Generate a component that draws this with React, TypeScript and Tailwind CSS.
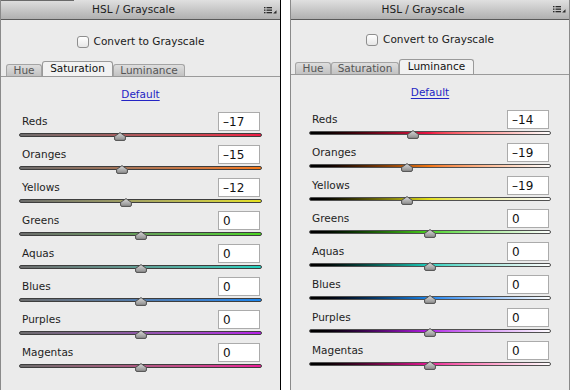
import React from "react";

type Row = { name: string; sat: number; lum: number; satBg: string; lumBg: string };

const rows: Row[] = [
  { name: "Reds", sat: -17, lum: -14, satBg: "from-[#6c6c6c] to-[#ee1644]", lumBg: "from-black via-[#ee1644] to-white" },
  { name: "Oranges", sat: -15, lum: -19, satBg: "from-[#6c6c6c] to-[#f57814]", lumBg: "from-black via-[#f57814] to-white" },
  { name: "Yellows", sat: -12, lum: -19, satBg: "from-[#6c6c6c] to-[#e6e21c]", lumBg: "from-black via-[#e6e21c] to-white" },
  { name: "Greens", sat: 0, lum: 0, satBg: "from-[#6c6c6c] to-[#4ad41e]", lumBg: "from-black via-[#4ad41e] to-white" },
  { name: "Aquas", sat: 0, lum: 0, satBg: "from-[#6c6c6c] to-[#1ed2c0]", lumBg: "from-black via-[#1ed2c0] to-white" },
  { name: "Blues", sat: 0, lum: 0, satBg: "from-[#6c6c6c] to-[#1a86ee]", lumBg: "from-black via-[#1a86ee] to-white" },
  { name: "Purples", sat: 0, lum: 0, satBg: "from-[#6c6c6c] to-[#b41ee6]", lumBg: "from-black via-[#b41ee6] to-white" },
  { name: "Magentas", sat: 0, lum: 0, satBg: "from-[#6c6c6c] to-[#ec1a98]", lumBg: "from-black via-[#ec1a98] to-white" },
];

function MenuIcon() {
  return (
    <svg width="13" height="7" viewBox="0 0 13 7" className="shrink-0">
      <g fill="#2a2a2a">
        <rect x="0" y="0" width="1.5" height="1.3" />
        <rect x="2.5" y="0" width="5.5" height="1.3" />
        <rect x="0" y="2.5" width="1.5" height="1.3" />
        <rect x="2.5" y="2.5" width="5.5" height="1.3" />
        <rect x="0" y="5" width="1.5" height="1.3" />
        <rect x="2.5" y="5" width="5.5" height="1.3" />
        <path d="M12.5 3.2 L12.5 6.5 L9.2 6.5 Z" />
      </g>
    </svg>
  );
}

function Thumb({ id }: { id: string }) {
  return (
    <svg width="12" height="9" viewBox="0 0 12 9">
      <defs>
        <linearGradient id={id} x1="0" y1="0" x2="0" y2="1">
          <stop offset="0" stopColor="#dadada" />
          <stop offset="1" stopColor="#8a8a8a" />
        </linearGradient>
      </defs>
      <path
        d="M6 0.6 L11.4 4.4 L11.4 7 Q11.4 8.4 10 8.4 L2 8.4 Q0.6 8.4 0.6 7 L0.6 4.4 Z"
        fill={`url(#${id})`}
        stroke="#4e4e4e"
        strokeWidth="1"
      />
    </svg>
  );
}

function Panel({ right }: { right?: boolean }) {
  const tabs = right
    ? [
        { t: "Hue", w: "w-[36px]", active: false },
        { t: "Saturation", w: "w-[68px]", active: false },
        { t: "Luminance", w: "w-[75px]", active: true },
      ]
    : [
        { t: "Hue", w: "w-[36px]", active: false },
        { t: "Saturation", w: "w-[71px]", active: true },
        { t: "Luminance", w: "w-[72px]", active: false },
      ];
  return (
    <div
      className={
        right
          ? "ml-[9px] flex h-[390px] w-[280px] flex-col border-x border-[#8a8a8a] bg-[#ebebeb]"
          : "flex h-[390px] w-[281px] flex-col border-l border-r border-l-[#8a8a8a] border-r-black bg-[#ebebeb]"
      }
    >
      {/* header */}
      <div className="flex flex-col border-b border-[#5a5a5a] bg-linear-to-b from-[#e0e0e0] to-[#b0b0b0]">
        {!right && <div className="h-px w-[73px] bg-[#6a6a6a]" />}
        <div className={right ? "flex h-[19px] items-center" : "flex h-[18px] items-center"}>
          <span className="flex-1 pl-[2px] text-center text-[10.5px] text-[#1c1c1c]">HSL / Grayscale</span>
          <div className="mr-[3px] flex items-center">
            <MenuIcon />
          </div>
        </div>
      </div>

      {/* checkbox */}
      <div className={right ? "mt-[13px] flex h-[14px] items-center justify-center gap-[5px]" : "mt-[15px] flex h-[14px] items-center justify-center gap-[5px]"}>
        <span className="h-[12px] w-[12px] rounded-[3px] border border-[#8e8e8e] bg-linear-to-b from-white to-[#e6e6e6]" />
        <span className="text-[10.5px] text-[#1a1a1a]">Convert to Grayscale</span>
      </div>

      {/* tabs */}
      <div className={right ? "mt-[13px] flex h-[15px] items-end border-b border-[#9a9a9a]" : "mt-[13px] flex h-[15px] items-end border-b border-[#9a9a9a]"}>
        <div className={right ? "w-[4px]" : "w-[5px]"} />
        {tabs.map((tab) => (
          <div
            key={tab.t}
            className={
              tab.active
                ? `${tab.w} flex h-[15px] items-center justify-center rounded-t-[3px] border border-b-0 border-[#9a9a9a] bg-[#f2f2f2] text-[10.5px] text-[#111]`
                : `${tab.w} flex h-[12px] items-center justify-center rounded-t-[3px] border border-b-0 border-[#a4a4a4] bg-linear-to-b from-[#dedede] to-[#c2c2c2] text-[10.5px] text-[#555]`
            }
          >
            {tab.t}
          </div>
        ))}
      </div>

      {/* default */}
      <div className="mt-[11px] flex h-[14px] items-center justify-center">
        <span className="text-[10.5px] text-[#2424c4] underline underline-offset-2">Default</span>
      </div>

      {/* rows */}
      <div className="mt-[10px] flex flex-col px-[18px]">
        {rows.map((r, i) => {
          const v = right ? r.lum : r.sat;
          const pct = 50 + v / 2;
          return (
            <div key={r.name} className="flex h-[33px] flex-col">
              <div className="flex h-[19px] items-center justify-between">
                <span className="pl-[3px] text-[10.5px] text-[#1e1e1e]">{r.name}</span>
                <div className="mr-[2px] flex h-[19px] w-[42px] items-center border border-[#ababab] bg-white pl-[4px] text-[12px] text-[#111]">
                  {v < 0 ? `–${-v}` : `${v}`}
                </div>
              </div>
              <div className="relative h-[14px]">
                <div
                  className={
                    right
                      ? `mt-[2px] h-[4px] rounded-full border border-[#505050] bg-linear-to-r ${r.lumBg}`
                      : `mt-[2px] h-[4px] rounded-full border border-[#3e3e3e] bg-linear-to-r ${r.satBg}`
                  }
                />
                <div className="absolute top-[1px] leading-none" style={{ left: `calc(${pct}% - 6px)` }}>
                  <Thumb id={`g${right ? "r" : "l"}${i}`} />
                </div>
              </div>
            </div>
          );
        })}
      </div>
    </div>
  );
}

export default function App() {
  return (
    <div className="flex h-[390px] w-[570px] overflow-hidden bg-white font-['DejaVu_Sans',sans-serif]">
      <Panel />
      <Panel right />
    </div>
  );
}
